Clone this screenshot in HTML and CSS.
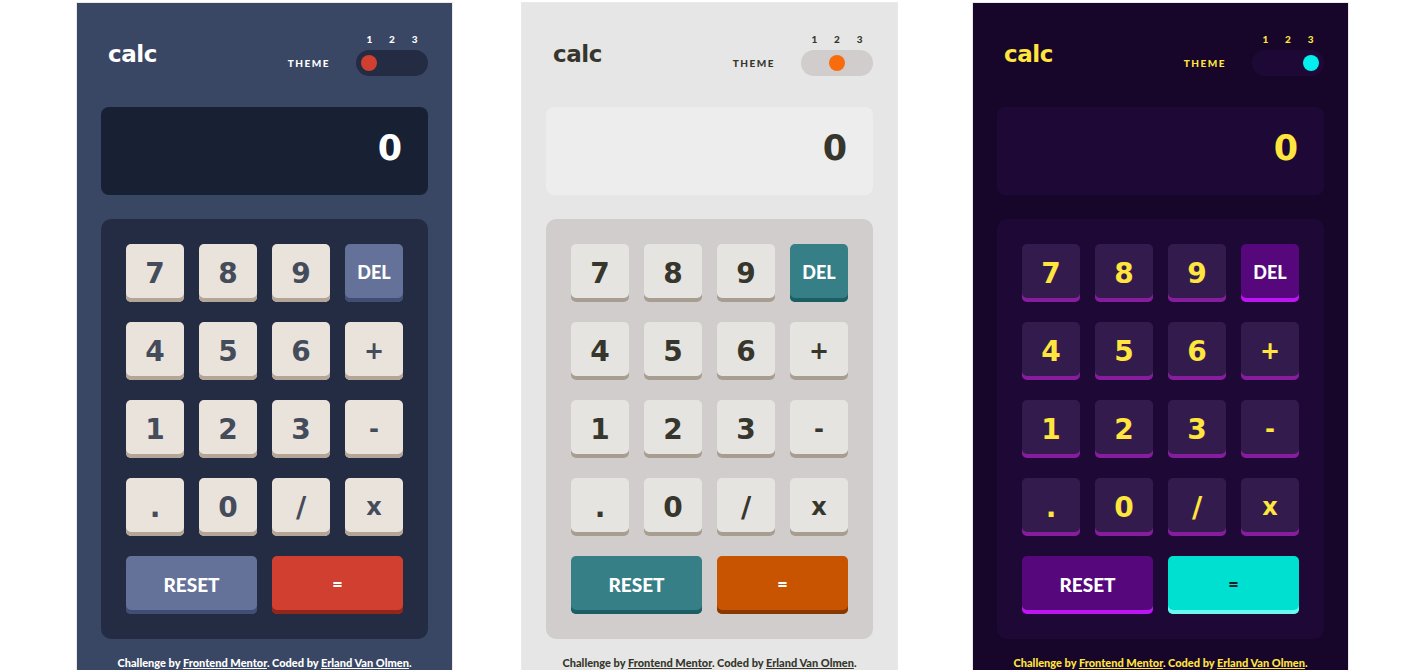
FILE: index.html
```html
<!DOCTYPE html>
<html lang="en">
<head>
<meta charset="utf-8">
<title>Calculator themes</title>
<link rel="stylesheet" href="styles.css">
</head>
<body>
<div class="page">
  <main class="calc t1">
    <header class="top">
      <h1 class="logo">calc</h1>
      <div class="theme">
        <span class="theme-label">THEME</span>
        <div class="switch">
          <div class="nums"><span>1</span><span>2</span><span>3</span></div>
          <div class="track pos1"><span class="dot"></span></div>
        </div>
      </div>
    </header>
    <div class="screen">0</div>
    <div class="keypad">
      <button class="key">7</button><button class="key">8</button><button class="key">9</button><button class="key del">DEL</button>
      <button class="key">4</button><button class="key">5</button><button class="key">6</button><button class="key op">+</button>
      <button class="key">1</button><button class="key">2</button><button class="key">3</button><button class="key op">-</button>
      <button class="key">.</button><button class="key">0</button><button class="key">/</button><button class="key op">x</button>
      <button class="key wide reset">RESET</button><button class="key wide equal">=</button>
    </div>
    <p class="credit">Challenge by <a href="#">Frontend Mentor</a>. Coded by <a href="#">Erland Van Olmen</a>.</p>
  </main>

  <main class="calc t2">
    <header class="top">
      <h1 class="logo">calc</h1>
      <div class="theme">
        <span class="theme-label">THEME</span>
        <div class="switch">
          <div class="nums"><span>1</span><span>2</span><span>3</span></div>
          <div class="track pos2"><span class="dot"></span></div>
        </div>
      </div>
    </header>
    <div class="screen">0</div>
    <div class="keypad">
      <button class="key">7</button><button class="key">8</button><button class="key">9</button><button class="key del">DEL</button>
      <button class="key">4</button><button class="key">5</button><button class="key">6</button><button class="key op">+</button>
      <button class="key">1</button><button class="key">2</button><button class="key">3</button><button class="key op">-</button>
      <button class="key">.</button><button class="key">0</button><button class="key">/</button><button class="key op">x</button>
      <button class="key wide reset">RESET</button><button class="key wide equal">=</button>
    </div>
    <p class="credit">Challenge by <a href="#">Frontend Mentor</a>. Coded by <a href="#">Erland Van Olmen</a>.</p>
  </main>

  <main class="calc t3">
    <header class="top">
      <h1 class="logo">calc</h1>
      <div class="theme">
        <span class="theme-label">THEME</span>
        <div class="switch">
          <div class="nums"><span>1</span><span>2</span><span>3</span></div>
          <div class="track pos3"><span class="dot"></span></div>
        </div>
      </div>
    </header>
    <div class="screen">0</div>
    <div class="keypad">
      <button class="key">7</button><button class="key">8</button><button class="key">9</button><button class="key del">DEL</button>
      <button class="key">4</button><button class="key">5</button><button class="key">6</button><button class="key op">+</button>
      <button class="key">1</button><button class="key">2</button><button class="key">3</button><button class="key op">-</button>
      <button class="key">.</button><button class="key">0</button><button class="key">/</button><button class="key op">x</button>
      <button class="key wide reset">RESET</button><button class="key wide equal">=</button>
    </div>
    <p class="credit">Challenge by <a href="#">Frontend Mentor</a>. Coded by <a href="#">Erland Van Olmen</a>.</p>
  </main>
</div>
</body>
</html>
```
FILE: styles.css
```css
* { box-sizing: border-box; }

body {
  margin: 0;
  background: #ffffff;
  font-family: "Lato", "Liberation Sans", sans-serif;
}

.page {
  display: flex;
  align-items: flex-start;
  padding: 3px 0 0 77px;
}

.calc {
  width: 375px;
  height: 667px;
  flex-shrink: 0;
  padding: 0 24px;
  display: flex;
  flex-direction: column;
  box-shadow: 0 0 0 1px #e9e9e9;
}
.calc.t2 { margin-left: 70px; }
.calc.t3 { margin-left: 76px; }

/* header */
.top {
  display: flex;
  justify-content: space-between;
  align-items: flex-end;
  padding-top: 30px;
  margin-bottom: 31px;
}
.logo {
  margin: 0 0 10px 7px;
  font: 700 23px/23px "DejaVu Sans", sans-serif;
  letter-spacing: -0.4px;
}
.theme {
  display: flex;
  align-items: flex-end;
}
.theme-label {
  font: 900 10px/26px "Lato", sans-serif;
  letter-spacing: 1.5px;
  margin-right: 26px;
}
.switch {
  width: 72px;
  display: flex;
  flex-direction: column;
  gap: 5px;
}
.nums {
  display: grid;
  grid-template-columns: repeat(3, 1fr);
  padding: 0 2px;
  text-align: center;
  font: 900 10px/12px "Lato", sans-serif;
}
.track {
  height: 26px;
  border-radius: 13px;
  padding: 0 5px;
  display: flex;
  align-items: center;
}
.track.pos1 { justify-content: flex-start; }
.track.pos2 { justify-content: center; }
.track.pos3 { justify-content: flex-end; }
.dot {
  width: 16px;
  height: 16px;
  border-radius: 50%;
}

/* screen */
.screen {
  height: 88px;
  border-radius: 8px;
  display: flex;
  align-items: center;
  justify-content: flex-end;
  padding: 0 26px 6px 0;
  margin-bottom: 24px;
  font: 700 35px "DejaVu Sans", sans-serif;
}

/* keypad */
.keypad {
  border-radius: 10px;
  padding: 25px;
  display: grid;
  grid-template-columns: repeat(4, 1fr);
  grid-auto-rows: 58px;
  column-gap: 15px;
  row-gap: 20px;
}
.key {
  border: 0;
  border-radius: 5px;
  padding: 0;
  display: flex;
  align-items: center;
  justify-content: center;
  font: 700 28px "DejaVu Sans", sans-serif;
  cursor: pointer;
}
.key.op { font-size: 24px; }
.key.del {
  font: 900 18px "Lato", sans-serif;
  padding-bottom: 2px;
}
.key.wide { grid-column: span 2; }
.key.reset {
  font: 900 19px "Lato", sans-serif;
  padding-bottom: 2px;
}
.key.equal {
  font: 900 18px "Lato", sans-serif;
  padding-bottom: 2px;
}

.credit {
  margin: 17px 0 0;
  text-align: center;
  font: 900 11px/14px "Lato", sans-serif;
}
.credit a { color: inherit; }

/* ---------- theme 1 ---------- */
.t1 { background: #3a4764; color: #ffffff; }
.t1 .track, .t1 .keypad { background: #232c43; }
.t1 .dot { background: #d03f2f; }
.t1 .screen { background: #182034; color: #ffffff; }
.t1 .key { background: #eae3dc; color: #444b5a; box-shadow: inset 0 -4px 0 #b4a597; }
.t1 .key.del, .t1 .key.reset { background: #647198; color: #ffffff; box-shadow: inset 0 -4px 0 #414e73; }
.t1 .key.equal { background: #d03f2f; color: #ffffff; box-shadow: inset 0 -4px 0 #93261a; }

/* ---------- theme 2 ---------- */
.t2 { background: #e6e6e6; color: #36362c; }
.t2 .track, .t2 .keypad { background: #d2cdcd; }
.t2 .dot { background: #f96c0d; }
.t2 .screen { background: #ededed; color: #36362c; }
.t2 .key { background: #e5e4e1; color: #36362c; box-shadow: inset 0 -4px 0 #a79e91; }
.t2 .key.del, .t2 .key.reset { background: #377f86; color: #ffffff; box-shadow: inset 0 -4px 0 #1b5f65; }
.t2 .key.equal { background: #c85402; color: #ffffff; box-shadow: inset 0 -4px 0 #873901; }

/* ---------- theme 3 ---------- */
.t3 { background: #17062a; color: #ffe53d; }
.t3 .track, .t3 .keypad { background: #1e0936; }
.t3 .dot { background: #00f0ee; }
.t3 .screen { background: #1e0936; color: #ffe53d; }
.t3 .key { background: #331c4d; color: #ffe53d; box-shadow: inset 0 -4px 0 #881c9e; }
.t3 .key.del, .t3 .key.reset { background: #56077c; color: #ffffff; box-shadow: inset 0 -4px 0 #be15f4; }
.t3 .key.equal { background: #00e0d1; color: #1a2327; box-shadow: inset 0 -4px 0 #6cf9f1; }
```
